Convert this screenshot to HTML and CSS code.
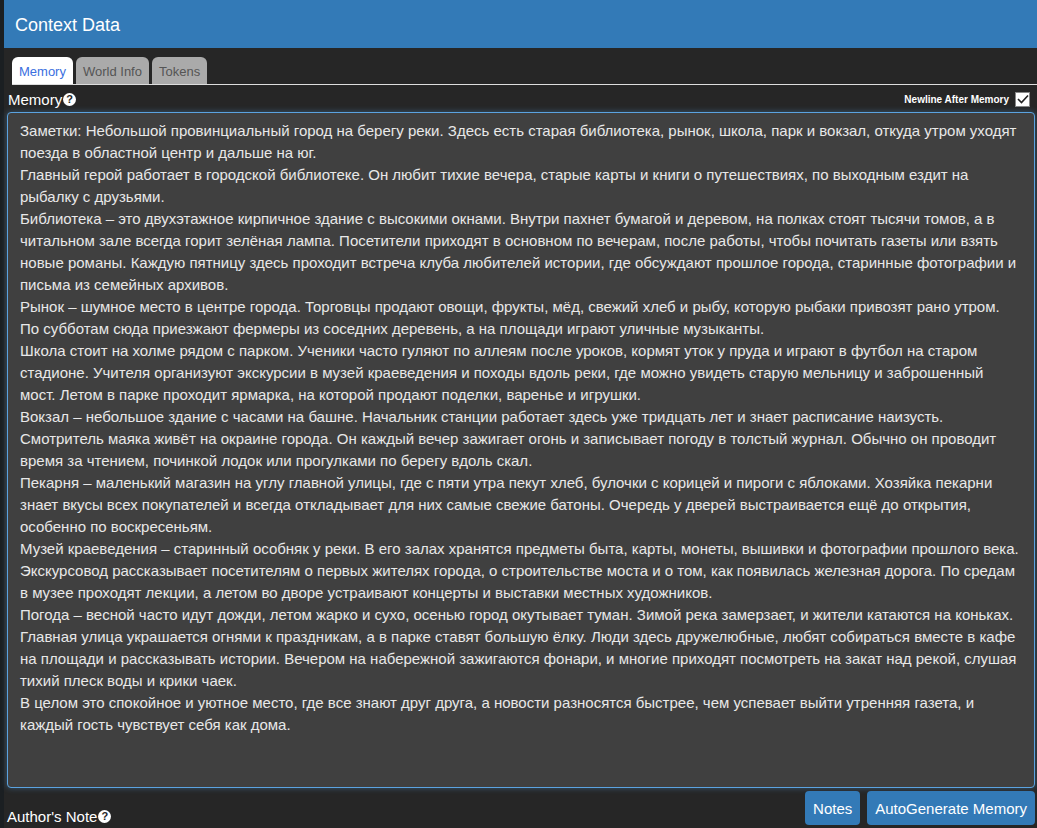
FILE: index.html
```html
<!DOCTYPE html>
<html lang="ru">
<head>
  <meta charset="UTF-8">
  <title>Context Data</title>
  <link rel="stylesheet" href="styles.css">
</head>
<body>

  <div class="popup">
    <div class="popup-title">Context Data</div>

    <div class="tabs">
      <div class="tab active">Memory</div>
      <div class="tab">World Info</div>
      <div class="tab">Tokens</div>
    </div>

    <div class="mem-head">
      <span class="label">Memory<span class="help">?</span></span>
      <label class="newline">Newline After Memory <span class="check"><svg width="12" height="10" viewBox="0 0 12 10"><path d="M1 5 L4.5 8.5 L11 1.5" fill="none" stroke="#222" stroke-width="1.6"/></svg></span></label>
    </div>

    <div class="memory-box">
      <p>Заметки: Небольшой провинциальный город на берегу реки. Здесь есть старая библиотека, рынок, школа, парк и вокзал, откуда утром уходят поезда в областной центр и дальше на юг.</p>
      <p>Главный герой работает в городской библиотеке. Он любит тихие вечера, старые карты и книги о путешествиях, по выходным ездит на рыбалку с друзьями.</p>
      <p>Библиотека – это двухэтажное кирпичное здание с высокими окнами. Внутри пахнет бумагой и деревом, на полках стоят тысячи томов, а в читальном зале всегда горит зелёная лампа. Посетители приходят в основном по вечерам, после работы, чтобы почитать газеты или взять новые романы. Каждую пятницу здесь проходит встреча клуба любителей истории, где обсуждают прошлое города, старинные фотографии и письма из семейных архивов.</p>
      <p>Рынок – шумное место в центре города. Торговцы продают овощи, фрукты, мёд, свежий хлеб и рыбу, которую рыбаки привозят рано утром. По субботам сюда приезжают фермеры из соседних деревень, а на площади играют уличные музыканты.</p>
      <p>Школа стоит на холме рядом с парком. Ученики часто гуляют по аллеям после уроков, кормят уток у пруда и играют в футбол на старом стадионе. Учителя организуют экскурсии в музей краеведения и походы вдоль реки, где можно увидеть старую мельницу и заброшенный мост. Летом в парке проходит ярмарка, на которой продают поделки, варенье и игрушки.</p>
      <p>Вокзал – небольшое здание с часами на башне. Начальник станции работает здесь уже тридцать лет и знает расписание наизусть.</p>
      <p>Смотритель маяка живёт на окраине города. Он каждый вечер зажигает огонь и записывает погоду в толстый журнал. Обычно он проводит время за чтением, починкой лодок или прогулками по берегу вдоль скал.</p>
      <p>Пекарня – маленький магазин на углу главной улицы, где с пяти утра пекут хлеб, булочки с корицей и пироги с яблоками. Хозяйка пекарни знает вкусы всех покупателей и всегда откладывает для них самые свежие батоны. Очередь у дверей выстраивается ещё до открытия, особенно по воскресеньям.</p>
      <p>Музей краеведения – старинный особняк у реки. В его залах хранятся предметы быта, карты, монеты, вышивки и фотографии прошлого века. Экскурсовод рассказывает посетителям о первых жителях города, о строительстве моста и о том, как появилась железная дорога. По средам в музее проходят лекции, а летом во дворе устраивают концерты и выставки местных художников.</p>
      <p>Погода – весной часто идут дожди, летом жарко и сухо, осенью город окутывает туман. Зимой река замерзает, и жители катаются на коньках. Главная улица украшается огнями к праздникам, а в парке ставят большую ёлку. Люди здесь дружелюбные, любят собираться вместе в кафе на площади и рассказывать истории. Вечером на набережной зажигаются фонари, и многие приходят посмотреть на закат над рекой, слушая тихий плеск воды и крики чаек.</p>
      <p>В целом это спокойное и уютное место, где все знают друг друга, а новости разносятся быстрее, чем успевает выйти утренняя газета, и каждый гость чувствует себя как дома.</p>
    </div>

    <div class="footer">
      <span class="label">Author's Note<span class="help">?</span></span>
      <div class="buttons">
        <button class="btn">Notes</button>
        <button class="btn">AutoGenerate Memory</button>
      </div>
    </div>
  </div>

</body>
</html>
```

FILE: styles.css
```css
html, body { margin: 0; padding: 0; height: 100%; overflow: hidden; }
body { background: #1b1f22; font-family: "Liberation Sans", Arial, sans-serif; color: #fff; }

.popup { margin-left: 4px; height: 828px; background: #262626; display: flex; flex-direction: column; }
.popup-title { background: #337ab7; height: 48px; padding: 0 0 0 11px; font-size: 18px; line-height: 50px; color: #fff; }

.tabs { display: flex; gap: 3px; margin: 9px 0 0 8px; border-bottom: 1px solid #ddd; }
.tab {
  background: #aaa;
  color: #555;
  font-size: 13px;
  padding: 0 7px;
  height: 27px;
  line-height: 29px;
  border-radius: 6px 6px 0 0;
}
.tab.active { background: #fff; color: #3b6fe0; }

.mem-head { display: flex; justify-content: space-between; align-items: center; margin: 5px 7px 0 4px; height: 18px; }
.label { font-size: 15px; display: flex; align-items: center; }
.help {
  display: inline-block;
  width: 13px;
  height: 13px;
  border-radius: 50%;
  background: #fff;
  color: #262626;
  font-size: 11px;
  font-weight: bold;
  line-height: 13px;
  text-align: center;
  margin-left: 1px;
}
.newline { font-size: 10px; font-weight: bold; display: flex; align-items: center; gap: 6px; }
.check {
  width: 13px;
  height: 13px;
  background: #fff;
  border: 1px solid #888;
  display: flex;
  align-items: center;
  justify-content: center;
}

.memory-box {
  margin: 4px 2px 0 3px;
  height: 652px;
  background: #404040;
  border: 1px solid #5ba3e0;
  border-radius: 4px;
  box-shadow: 0 0 6px rgba(91,163,224,0.4);
  padding: 7px 12px 15px 12px;
  color: #e8e8e8;
  font-size: 15px;
  line-height: 22px;
  overflow: hidden;
}
.memory-box p { margin: 0; }

.footer { display: flex; justify-content: space-between; align-items: flex-end; margin: 3px 2px 0 3px; }
.buttons { display: flex; gap: 7px; }
.btn {
  background: #337ab7;
  color: #fff;
  border: none;
  border-radius: 4px;
  font-family: "Liberation Sans", Arial, sans-serif;
  font-size: 15px;
  padding: 0 8px;
  height: 34px;
  cursor: pointer;
}
```
